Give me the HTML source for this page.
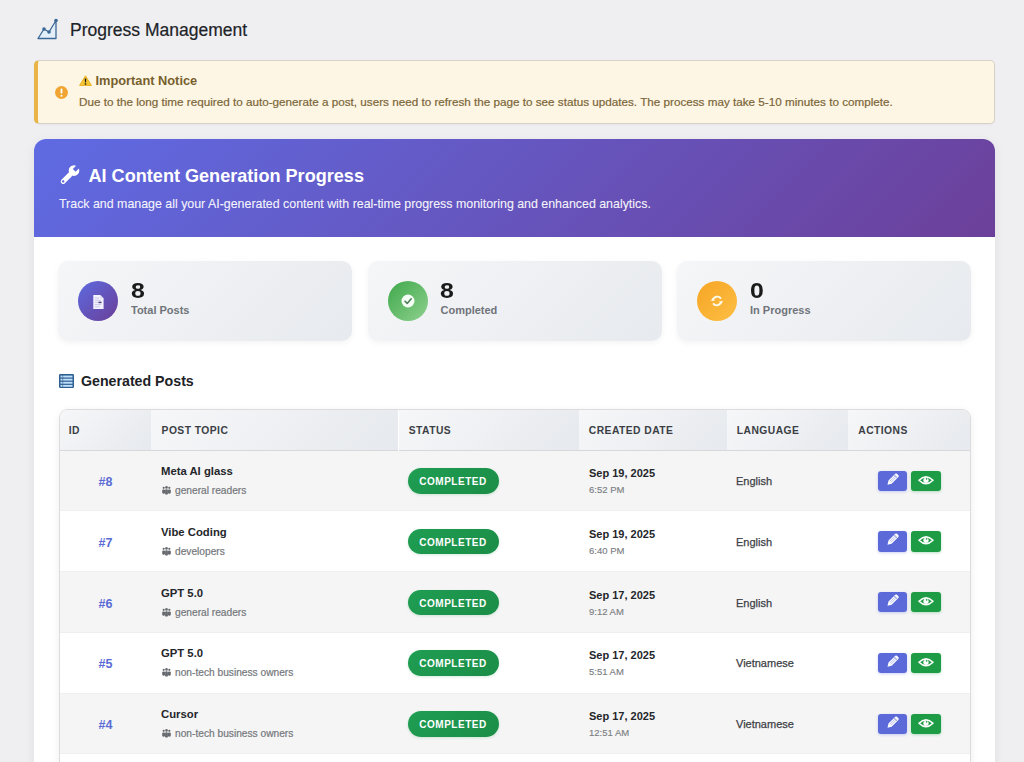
<!DOCTYPE html>
<html><head><meta charset="utf-8">
<style>
*{box-sizing:border-box;margin:0;padding:0}
html,body{width:1024px;height:762px;overflow:hidden}
body{background:#efeff2;font-family:"Liberation Sans",sans-serif;position:relative;color:#1d2327}
.abs{position:absolute}
.rs{-webkit-text-stroke:.2px currentColor}
#h1{-webkit-text-stroke:.2px currentColor;left:70px;top:17.5px;font-size:17.5px;line-height:24px;color:#1d2327;white-space:nowrap}
#notice{left:34px;top:60px;width:961px;height:64px;background:#fef6e4;border:1px solid #d6d1c6;border-left:4px solid #ebb447;border-radius:5px;box-shadow:0 1px 2px rgba(0,0,0,.04)}
#notice .t1{position:absolute;left:57.5px;top:12px;font-size:12.8px;font-weight:700;color:#76602e;white-space:nowrap;line-height:16px}
#notice .t2{position:absolute;left:41px;top:32.5px;-webkit-text-stroke:.2px currentColor;font-size:11.7px;color:#7b6639;white-space:nowrap;line-height:16px}
#card{left:34px;top:139px;width:961px;height:700px;background:#fff;border-radius:12px;overflow:hidden;box-shadow:0 3px 12px rgba(0,0,0,.06)}
#hdr{position:absolute;left:0;top:0;width:961px;height:98px;background:linear-gradient(135deg,#5f6be3 0%,#6c409a 100%)}
#hdr .tt{position:absolute;left:54.5px;top:25px;font-size:18.1px;font-weight:700;color:#fff;white-space:nowrap;line-height:24px}
#hdr .st{-webkit-text-stroke:.15px currentColor;position:absolute;left:25px;top:56.5px;font-size:12.4px;color:rgba(255,255,255,.92);white-space:nowrap;line-height:16px}
.stat{position:absolute;top:121.8px;width:294px;height:80.3px;border-radius:10px;background:linear-gradient(135deg,#f5f6f8,#e7eaee);box-shadow:0 2px 6px rgba(0,0,0,.05)}
.stat .ic{position:absolute;left:20px;top:20px;width:40px;height:40px;border-radius:50%}
.stat .ic svg{position:absolute;left:0;top:0}
.stat .num{position:absolute;left:72.5px;top:18.7px;font-size:22px;transform:scaleX(1.13);transform-origin:0 0;font-weight:700;color:#1a1a1a;line-height:24px}
.stat .lbl{position:absolute;left:73px;top:42px;font-size:11px;font-weight:700;color:#70747a;line-height:14px;white-space:nowrap}
#gp{position:absolute;left:25px;top:234.5px;}
#gp .t{position:absolute;left:22px;top:-1px;font-size:14.2px;font-weight:700;color:#1d2327;line-height:16px;white-space:nowrap}
#tbl{position:absolute;left:24.5px;top:270px;width:912px;height:520px;border:1px solid #dcdcde;border-radius:9px 9px 0 0;overflow:hidden;box-shadow:0 2px 8px rgba(0,0,0,.07);background:#fff}
.th{position:absolute;top:0;height:40.5px;background:linear-gradient(135deg,#f6f7f9,#e6e9ed);border-bottom:1px solid #d6d8db}
.th span{position:absolute;left:10.3px;top:14.5px;font-size:10.3px;font-weight:700;letter-spacing:.45px;color:#3b3f45;line-height:12px;white-space:nowrap}
.tr{position:absolute;left:0;width:100%;height:60.75px;background:#fff;border-bottom:1px solid #efefef}
.tr.odd{background:#f5f5f5}
.tr .id{position:absolute;left:0;width:92px;text-align:center;top:24.5px;font-size:12.5px;font-weight:700;color:#5b6bd6;line-height:14px}
.tr .ttl{position:absolute;left:101.5px;top:14.5px;font-size:11.3px;font-weight:700;color:#24262a;line-height:13px;white-space:nowrap}
.tr .aud{-webkit-text-stroke:.2px #74777c;position:absolute;left:101.5px;top:34.5px;font-size:10.2px;color:#74777c;line-height:12px;white-space:nowrap;padding-left:14px}
.tr .aud .ppl{position:absolute;left:1px;top:1px;fill:#66696e}
.tr .badge{position:absolute;left:348px;top:17.6px;width:91px;height:25.6px;border-radius:13px;background:linear-gradient(135deg,#1f9e52,#1b8d47);color:#fff;font-size:10px;font-weight:700;letter-spacing:.5px;line-height:27px;text-align:center;box-shadow:0 1px 3px rgba(30,150,80,.18)}
.tr .date{position:absolute;left:529.5px;top:16.5px;font-size:11px;font-weight:700;color:#24262a;line-height:12px;white-space:nowrap}
.tr .time{-webkit-text-stroke:.15px currentColor;position:absolute;left:529.5px;top:33.5px;font-size:9.5px;color:#7c7f84;line-height:11px;white-space:nowrap}
.tr .lang{-webkit-text-stroke:.25px currentColor;position:absolute;left:676.5px;top:24.5px;font-size:11px;color:#3d4146;line-height:12px;white-space:nowrap}
.tr .btn{position:absolute;top:20.2px;width:29.5px;height:20.2px;border-radius:3px}
.tr .btn svg{position:absolute;left:0;top:0}
.tr .be{left:818.2px;background:#5b6ad8;box-shadow:0 1px 3px rgba(91,106,216,.3)}
.tr .bv{left:851.6px;background:#1e9b45;box-shadow:0 1px 3px rgba(30,155,69,.3)}
</style></head>
<body>
<svg class="abs" style="left:36px;top:17px" width="24" height="24" viewBox="0 0 24 24">
  <path d="M2 21.5 L8 12 L13 15 L20 3.5 L20 21.5 Z" fill="#e3eef9" stroke="#3b6796" stroke-width="1.3" stroke-linejoin="round"/>
  <circle cx="8" cy="12" r="1.8" fill="#3b6796"/><circle cx="13" cy="15" r="1.8" fill="#3b6796"/><circle cx="20" cy="3.5" r="1.8" fill="#3b6796"/>
</svg>
<div id="h1" class="abs">Progress Management</div>

<div id="notice" class="abs">
  <svg style="position:absolute;left:17px;top:24.5px" width="13" height="13" viewBox="0 0 13 13"><circle cx="6.5" cy="6.5" r="6.5" fill="#f0a532"/><rect x="5.6" y="2.6" width="1.8" height="5" rx=".9" fill="#fff"/><circle cx="6.5" cy="9.7" r="1" fill="#fff"/></svg>
  <svg style="position:absolute;left:40.5px;top:14px" width="13" height="11" viewBox="0 0 13 11"><path d="M6.5 0.8 L12.5 10.5 L0.5 10.5 Z" fill="#f5c431" stroke="#eab52a" stroke-width="1" stroke-linejoin="round"/><path d="M5.7 3.4 h1.6 l-.3 4.2 h-1 z" fill="#1a1a1a"/><rect x="5.75" y="8.3" width="1.5" height="1.4" fill="#1a1a1a"/></svg>
  <div class="t1">Important Notice</div>
  <div class="t2">Due to the long time required to auto-generate a post, users need to refresh the page to see status updates. The process may take 5-10 minutes to complete.</div>
</div>

<div id="card" class="abs">
  <div id="hdr">
    <svg style="position:absolute;left:21.7px;top:22.7px" width="26.6" height="26.6" viewBox="0 0 24 24"><defs><mask id="wm"><rect width="24" height="24" fill="#fff"/><rect x="18.3" y="10.2" width="6" height="3.6" fill="#000"/><circle cx="4.2" cy="12" r="1.1" fill="#000"/></mask></defs><g transform="rotate(-45 12 12)" mask="url(#wm)"><rect x="2" y="9.8" width="13" height="4.4" rx="2.2" fill="#fff"/><circle cx="18" cy="12" r="4.8" fill="#fff"/></g></svg>
    <div class="tt">AI Content Generation Progress</div>
    <div class="st">Track and manage all your AI-generated content with real-time progress monitoring and enhanced analytics.</div>
  </div>
  <div class="stat" style="left:24px">
    <div class="ic" style="background:linear-gradient(135deg,#5d6ae0,#6b3f98)"><svg width="40" height="40" viewBox="0 0 40 40"><path d="M15.3 14 h7 l3.3 3.3 v10.6 h-10.3 z" fill="#f4f2ff"/><path d="M22.3 14 v3.3 h3.3" fill="#d8d4f0"/><path d="M16.8 17h4 M16.8 19.2h6 M16.8 21.4h3.5 M16.8 23.6h6.5 M16.8 25.8h5" stroke="#b9b4dc" stroke-width=".7"/><rect x="20.5" y="20.6" width="3" height="1.6" fill="#4b4580"/></svg></div>
    <div class="num">8</div><div class="lbl">Total Posts</div>
  </div>
  <div class="stat" style="left:333.5px">
    <div class="ic" style="background:linear-gradient(135deg,#3ea84a,#8fd18f)"><svg width="40" height="40" viewBox="0 0 40 40"><circle cx="20" cy="20" r="6.5" fill="#f6fff6"/><path d="M17 20.2 L19.2 22.4 L23.2 17.8" fill="none" stroke="#4f7f5a" stroke-width="1.6" stroke-linecap="round" stroke-linejoin="round"/></svg></div>
    <div class="num">8</div><div class="lbl">Completed</div>
  </div>
  <div class="stat" style="left:643px">
    <div class="ic" style="background:linear-gradient(135deg,#f7a524,#fcbf45)"><svg width="40" height="40" viewBox="0 0 40 40"><path d="M15.8 19.2 A4.6 4.6 0 0 1 24 17.6" fill="none" stroke="#fffbe8" stroke-width="1.9"/><path d="M24.2 20.8 A4.6 4.6 0 0 1 16 22.4" fill="none" stroke="#fffbe8" stroke-width="1.9"/><path d="M13.6 19.8 h4.4 l-2.2 -2.6 z M26.4 20.2 h-4.4 l2.2 2.6 z" fill="#fffbe8"/></svg></div>
    <div class="num">0</div><div class="lbl">In Progress</div>
  </div>
  <div id="gp">
    <svg style="position:absolute;left:0;top:0" width="15" height="14" viewBox="0 0 15 14"><rect x="0" y="0" width="15" height="14" rx="1.2" fill="#2f5f90"/><rect x="1.5" y="1.6" width="12" height="1.9" fill="#bfe0fb"/><rect x="1.5" y="4.7" width="12" height="1.9" fill="#bfe0fb"/><rect x="1.5" y="7.8" width="12" height="1.9" fill="#bfe0fb"/><rect x="1.5" y="10.9" width="12" height="1.9" fill="#bfe0fb"/><rect x="3.3" y="1" width=".9" height="12" fill="#2f5f90" opacity=".6"/></svg>
    <div class="t">Generated Posts</div>
  </div>
<!--TABLE-->
<div id="tbl">
<div class="th-row">
<div class="th" style="left:-1px;width:92.8px"><span>ID</span></div>
<div class="th" style="left:91.8px;width:247.2px"><span>POST TOPIC</span></div>
<div class="th" style="left:339px;width:180px"><span>STATUS</span></div>
<div class="th" style="left:519px;width:148px"><span>CREATED DATE</span></div>
<div class="th" style="left:667px;width:121.5px"><span>LANGUAGE</span></div>
<div class="th" style="left:788.5px;width:124px"><span>ACTIONS</span></div>
</div>
<div class="tr odd" style="top:40.50px">
<div class="id">#8</div>
<div class="ttl">Meta AI glass</div>
<div class="aud"><svg class="ppl" width="9" height="9" viewBox="0 0 9 9"><circle cx="1.7" cy="1.8" r="1.1"/><circle cx="4.5" cy="1.4" r="1.3"/><circle cx="7.3" cy="1.8" r="1.1"/><rect x="0.2" y="3.5" width="2.9" height="4.2" rx="1.1"/><rect x="3.1" y="3.2" width="2.8" height="5.4" rx="1.2"/><rect x="5.9" y="3.5" width="2.9" height="4.2" rx="1.1"/></svg>general readers</div>
<div class="badge">COMPLETED</div>
<div class="date">Sep 19, 2025</div><div class="time">6:52 PM</div>
<div class="lang">English</div>
<div class="btn be"><svg width="30" height="20" viewBox="0 0 30 20"><g transform="translate(14.6 8.6) rotate(-45)"><path d="M-7.2 0 L-3.6 -2.2 H6 Q7.2 -2.2 7.2 -1 V1 Q7.2 2.2 6 2.2 H-3.6 Z" fill="#fff"/><path d="M-3.2 -0.75 H5.5 M-3.2 0.75 H5.5" stroke="#8d96e0" stroke-width=".55"/><path d="M4.3 -2.2 V2.2" stroke="#5b6ad8" stroke-width=".5"/></g></svg></div>
<div class="btn bv"><svg width="30" height="20" viewBox="0 0 30 20"><path d="M8 9.3 Q15 2.4 22 9.3 Q15 16.2 8 9.3 Z" fill="#1e9b45" stroke="#fff" stroke-width="1.6" stroke-linejoin="round"/><circle cx="15" cy="9.3" r="2.6" fill="#fff"/><circle cx="15.6" cy="7.9" r=".8" fill="#1e9b45"/></svg></div>
</div>
<div class="tr" style="top:101.25px">
<div class="id">#7</div>
<div class="ttl">Vibe Coding</div>
<div class="aud"><svg class="ppl" width="9" height="9" viewBox="0 0 9 9"><circle cx="1.7" cy="1.8" r="1.1"/><circle cx="4.5" cy="1.4" r="1.3"/><circle cx="7.3" cy="1.8" r="1.1"/><rect x="0.2" y="3.5" width="2.9" height="4.2" rx="1.1"/><rect x="3.1" y="3.2" width="2.8" height="5.4" rx="1.2"/><rect x="5.9" y="3.5" width="2.9" height="4.2" rx="1.1"/></svg>developers</div>
<div class="badge">COMPLETED</div>
<div class="date">Sep 19, 2025</div><div class="time">6:40 PM</div>
<div class="lang">English</div>
<div class="btn be"><svg width="30" height="20" viewBox="0 0 30 20"><g transform="translate(14.6 8.6) rotate(-45)"><path d="M-7.2 0 L-3.6 -2.2 H6 Q7.2 -2.2 7.2 -1 V1 Q7.2 2.2 6 2.2 H-3.6 Z" fill="#fff"/><path d="M-3.2 -0.75 H5.5 M-3.2 0.75 H5.5" stroke="#8d96e0" stroke-width=".55"/><path d="M4.3 -2.2 V2.2" stroke="#5b6ad8" stroke-width=".5"/></g></svg></div>
<div class="btn bv"><svg width="30" height="20" viewBox="0 0 30 20"><path d="M8 9.3 Q15 2.4 22 9.3 Q15 16.2 8 9.3 Z" fill="#1e9b45" stroke="#fff" stroke-width="1.6" stroke-linejoin="round"/><circle cx="15" cy="9.3" r="2.6" fill="#fff"/><circle cx="15.6" cy="7.9" r=".8" fill="#1e9b45"/></svg></div>
</div>
<div class="tr odd" style="top:162.00px">
<div class="id">#6</div>
<div class="ttl">GPT 5.0</div>
<div class="aud"><svg class="ppl" width="9" height="9" viewBox="0 0 9 9"><circle cx="1.7" cy="1.8" r="1.1"/><circle cx="4.5" cy="1.4" r="1.3"/><circle cx="7.3" cy="1.8" r="1.1"/><rect x="0.2" y="3.5" width="2.9" height="4.2" rx="1.1"/><rect x="3.1" y="3.2" width="2.8" height="5.4" rx="1.2"/><rect x="5.9" y="3.5" width="2.9" height="4.2" rx="1.1"/></svg>general readers</div>
<div class="badge">COMPLETED</div>
<div class="date">Sep 17, 2025</div><div class="time">9:12 AM</div>
<div class="lang">English</div>
<div class="btn be"><svg width="30" height="20" viewBox="0 0 30 20"><g transform="translate(14.6 8.6) rotate(-45)"><path d="M-7.2 0 L-3.6 -2.2 H6 Q7.2 -2.2 7.2 -1 V1 Q7.2 2.2 6 2.2 H-3.6 Z" fill="#fff"/><path d="M-3.2 -0.75 H5.5 M-3.2 0.75 H5.5" stroke="#8d96e0" stroke-width=".55"/><path d="M4.3 -2.2 V2.2" stroke="#5b6ad8" stroke-width=".5"/></g></svg></div>
<div class="btn bv"><svg width="30" height="20" viewBox="0 0 30 20"><path d="M8 9.3 Q15 2.4 22 9.3 Q15 16.2 8 9.3 Z" fill="#1e9b45" stroke="#fff" stroke-width="1.6" stroke-linejoin="round"/><circle cx="15" cy="9.3" r="2.6" fill="#fff"/><circle cx="15.6" cy="7.9" r=".8" fill="#1e9b45"/></svg></div>
</div>
<div class="tr" style="top:222.75px">
<div class="id">#5</div>
<div class="ttl">GPT 5.0</div>
<div class="aud"><svg class="ppl" width="9" height="9" viewBox="0 0 9 9"><circle cx="1.7" cy="1.8" r="1.1"/><circle cx="4.5" cy="1.4" r="1.3"/><circle cx="7.3" cy="1.8" r="1.1"/><rect x="0.2" y="3.5" width="2.9" height="4.2" rx="1.1"/><rect x="3.1" y="3.2" width="2.8" height="5.4" rx="1.2"/><rect x="5.9" y="3.5" width="2.9" height="4.2" rx="1.1"/></svg>non-tech business owners</div>
<div class="badge">COMPLETED</div>
<div class="date">Sep 17, 2025</div><div class="time">5:51 AM</div>
<div class="lang">Vietnamese</div>
<div class="btn be"><svg width="30" height="20" viewBox="0 0 30 20"><g transform="translate(14.6 8.6) rotate(-45)"><path d="M-7.2 0 L-3.6 -2.2 H6 Q7.2 -2.2 7.2 -1 V1 Q7.2 2.2 6 2.2 H-3.6 Z" fill="#fff"/><path d="M-3.2 -0.75 H5.5 M-3.2 0.75 H5.5" stroke="#8d96e0" stroke-width=".55"/><path d="M4.3 -2.2 V2.2" stroke="#5b6ad8" stroke-width=".5"/></g></svg></div>
<div class="btn bv"><svg width="30" height="20" viewBox="0 0 30 20"><path d="M8 9.3 Q15 2.4 22 9.3 Q15 16.2 8 9.3 Z" fill="#1e9b45" stroke="#fff" stroke-width="1.6" stroke-linejoin="round"/><circle cx="15" cy="9.3" r="2.6" fill="#fff"/><circle cx="15.6" cy="7.9" r=".8" fill="#1e9b45"/></svg></div>
</div>
<div class="tr odd" style="top:283.50px">
<div class="id">#4</div>
<div class="ttl">Cursor</div>
<div class="aud"><svg class="ppl" width="9" height="9" viewBox="0 0 9 9"><circle cx="1.7" cy="1.8" r="1.1"/><circle cx="4.5" cy="1.4" r="1.3"/><circle cx="7.3" cy="1.8" r="1.1"/><rect x="0.2" y="3.5" width="2.9" height="4.2" rx="1.1"/><rect x="3.1" y="3.2" width="2.8" height="5.4" rx="1.2"/><rect x="5.9" y="3.5" width="2.9" height="4.2" rx="1.1"/></svg>non-tech business owners</div>
<div class="badge">COMPLETED</div>
<div class="date">Sep 17, 2025</div><div class="time">12:51 AM</div>
<div class="lang">Vietnamese</div>
<div class="btn be"><svg width="30" height="20" viewBox="0 0 30 20"><g transform="translate(14.6 8.6) rotate(-45)"><path d="M-7.2 0 L-3.6 -2.2 H6 Q7.2 -2.2 7.2 -1 V1 Q7.2 2.2 6 2.2 H-3.6 Z" fill="#fff"/><path d="M-3.2 -0.75 H5.5 M-3.2 0.75 H5.5" stroke="#8d96e0" stroke-width=".55"/><path d="M4.3 -2.2 V2.2" stroke="#5b6ad8" stroke-width=".5"/></g></svg></div>
<div class="btn bv"><svg width="30" height="20" viewBox="0 0 30 20"><path d="M8 9.3 Q15 2.4 22 9.3 Q15 16.2 8 9.3 Z" fill="#1e9b45" stroke="#fff" stroke-width="1.6" stroke-linejoin="round"/><circle cx="15" cy="9.3" r="2.6" fill="#fff"/><circle cx="15.6" cy="7.9" r=".8" fill="#1e9b45"/></svg></div>
</div>
<div class="tr" style="top:344.25px">
<div class="id">#3</div>
<div class="ttl">Claude Code</div>
<div class="aud"><svg class="ppl" width="9" height="9" viewBox="0 0 9 9"><circle cx="1.7" cy="1.8" r="1.1"/><circle cx="4.5" cy="1.4" r="1.3"/><circle cx="7.3" cy="1.8" r="1.1"/><rect x="0.2" y="3.5" width="2.9" height="4.2" rx="1.1"/><rect x="3.1" y="3.2" width="2.8" height="5.4" rx="1.2"/><rect x="5.9" y="3.5" width="2.9" height="4.2" rx="1.1"/></svg>developers</div>
<div class="badge">COMPLETED</div>
<div class="date">Sep 16, 2025</div><div class="time">3:20 PM</div>
<div class="lang">English</div>
<div class="btn be"><svg width="30" height="20" viewBox="0 0 30 20"><g transform="translate(14.6 8.6) rotate(-45)"><path d="M-7.2 0 L-3.6 -2.2 H6 Q7.2 -2.2 7.2 -1 V1 Q7.2 2.2 6 2.2 H-3.6 Z" fill="#fff"/><path d="M-3.2 -0.75 H5.5 M-3.2 0.75 H5.5" stroke="#8d96e0" stroke-width=".55"/><path d="M4.3 -2.2 V2.2" stroke="#5b6ad8" stroke-width=".5"/></g></svg></div>
<div class="btn bv"><svg width="30" height="20" viewBox="0 0 30 20"><path d="M8 9.3 Q15 2.4 22 9.3 Q15 16.2 8 9.3 Z" fill="#1e9b45" stroke="#fff" stroke-width="1.6" stroke-linejoin="round"/><circle cx="15" cy="9.3" r="2.6" fill="#fff"/><circle cx="15.6" cy="7.9" r=".8" fill="#1e9b45"/></svg></div>
</div>
</div>
<!--/TABLE-->
</div>
</body></html>
